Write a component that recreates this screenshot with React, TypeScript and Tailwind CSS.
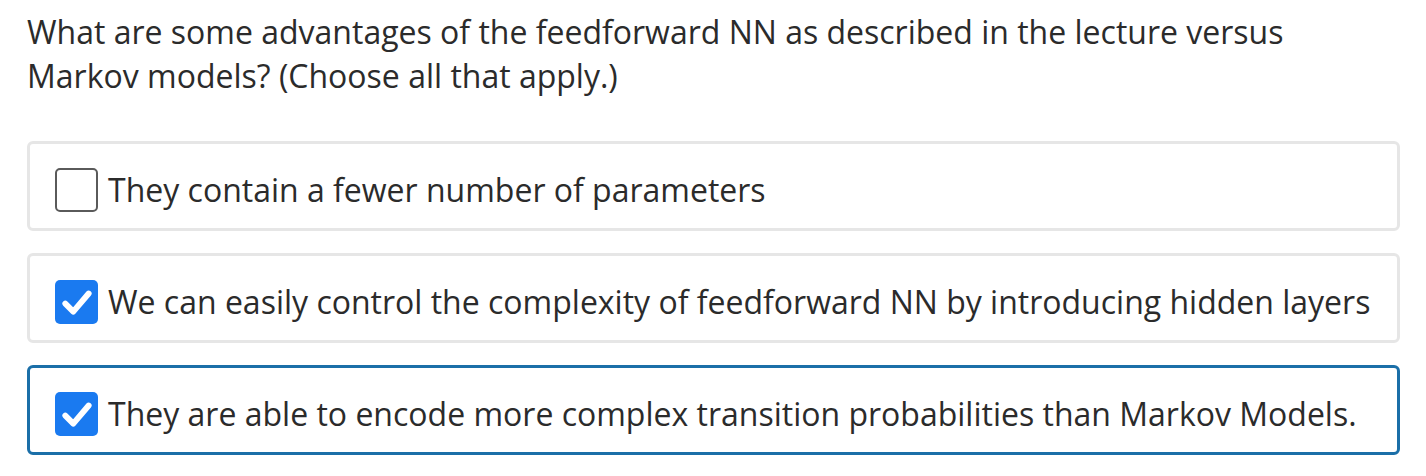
const options = [
  { text: "They contain a fewer number of parameters", checked: false, focused: false },
  {
    text: "We can easily control the complexity of feedforward NN by introducing hidden layers",
    checked: true,
    focused: false,
  },
  {
    text: "They are able to encode more complex transition probabilities than Markov Models.",
    checked: true,
    focused: true,
  },
];

function Option({ text, checked, focused }: { text: string; checked: boolean; focused: boolean }) {
  return (
    <div
      className={
        focused
          ? "flex h-[90px] items-center rounded-[6px] border-[3px] border-[#1b6fa8] pl-[25px] pt-[8px]"
          : "flex h-[90px] items-center rounded-[6px] border-[3px] border-[#e6e6e6] pl-[25px] pt-[8px]"
      }
    >
      {checked ? (
        <span className="flex h-[44px] w-[43px] shrink-0 items-center justify-center rounded-[5px] bg-[#1a7af0]">
          <svg viewBox="0 0 32 32" className="h-[34px] w-[34px]">
            <path
              d="M5 17.5 L12.5 25 L27 8"
              fill="none"
              stroke="white"
              strokeWidth="5.5"
              strokeLinecap="round"
              strokeLinejoin="round"
            />
          </svg>
        </span>
      ) : (
        <span className="h-[44px] w-[43px] shrink-0 rounded-[5px] border-2 border-[#5a5a5a] bg-white" />
      )}
      <span className="ml-[10px] text-[32px] leading-[40px] text-[#2b2b2b]">{text}</span>
    </div>
  );
}

export default function App() {
  return (
    <div className="h-[476px] w-[1426px] bg-white pl-[27px] pr-[26px] pt-[10px] font-['Open_Sans',sans-serif]">
      <p className="text-[32px] leading-[44px] text-[#2b2b2b]">
        What are some advantages of the feedforward NN as described in the lecture versus
        <br />
        Markov models? (Choose all that apply.)
      </p>
      <div className="mt-[43px] flex flex-col gap-[22px]">
        {options.map((o) => (
          <Option key={o.text} {...o} />
        ))}
      </div>
    </div>
  );
}
